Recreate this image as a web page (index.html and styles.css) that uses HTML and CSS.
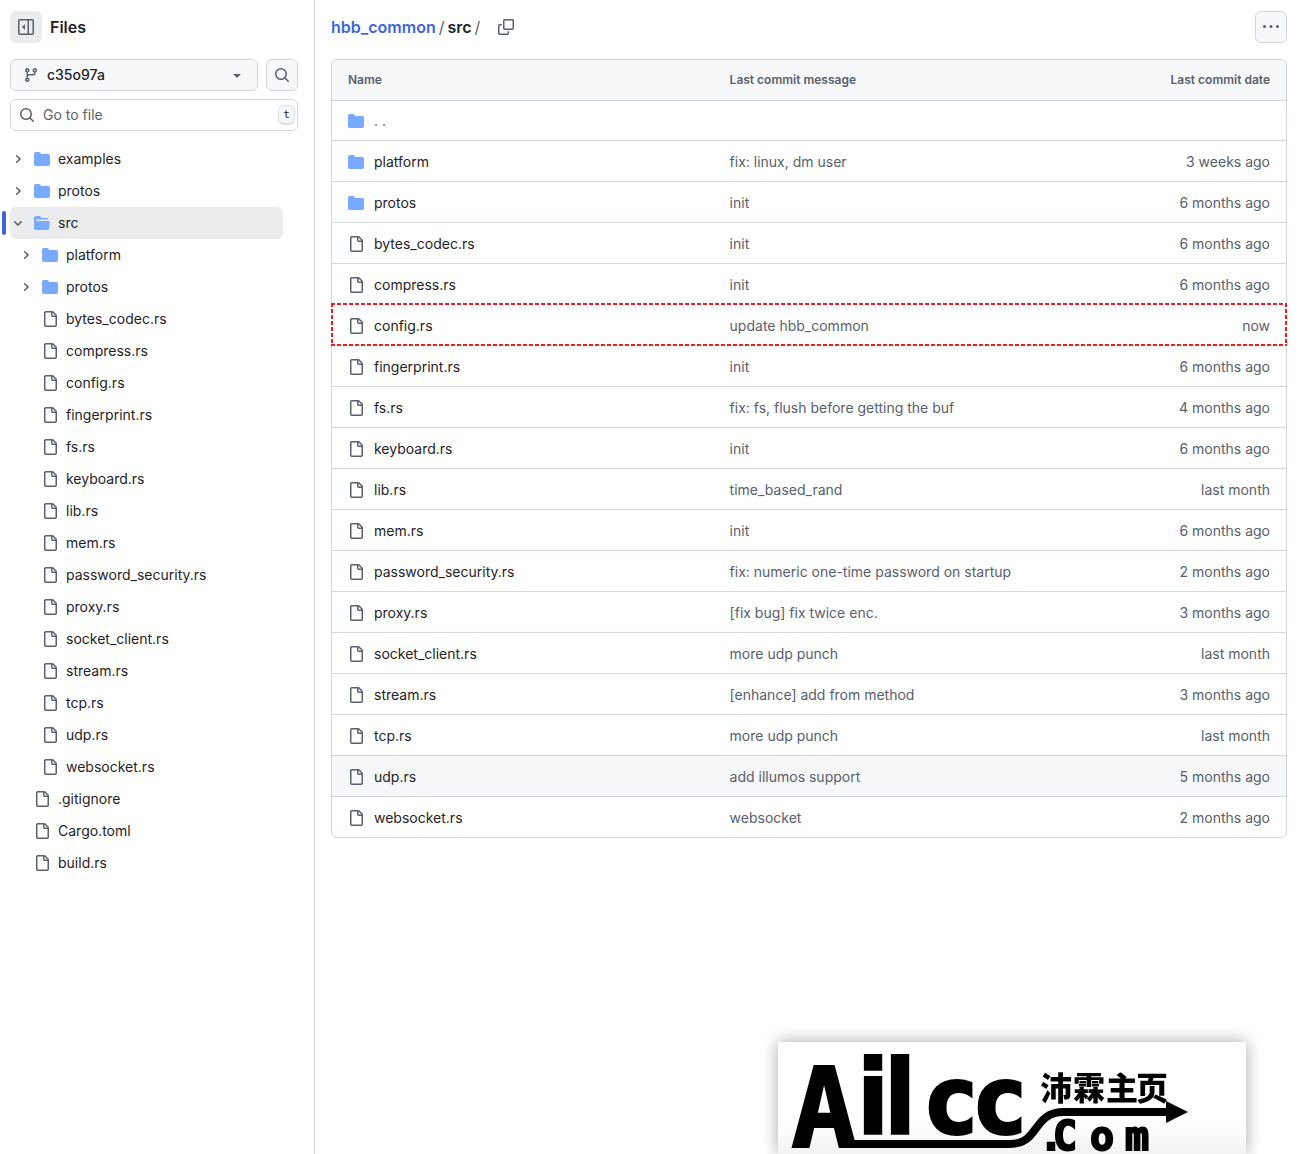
FILE: index.html
```html
<!DOCTYPE html>
<html lang="en">
<head>
  <meta charset="UTF-8" />
  <meta name="viewport" content="width=device-width, initial-scale=1" />
  <title>hbb_common/src</title>
  <link rel="stylesheet" href="styles.css">
</head>
<body>
  <!-- icons -->
  <svg class="sprite" aria-hidden="true">
    <symbol id="i-file" viewBox="0 0 16 16"><path d="M2 1.75C2 .784 2.784 0 3.75 0h6.586c.464 0 .909.184 1.237.513l2.914 2.914c.329.328.513.773.513 1.237v9.586A1.75 1.75 0 0 1 13.25 16h-9.5A1.75 1.75 0 0 1 2 14.25Zm1.75-.25a.25.25 0 0 0-.25.25v12.5c0 .138.112.25.25.25h9.5a.25.25 0 0 0 .25-.25V6h-2.75A1.75 1.75 0 0 1 9 4.25V1.5Zm6.75.062V4.25c0 .138.112.25.25.25h2.688l-.011-.013-2.914-2.914-.013-.011Z"/></symbol>
    <symbol id="i-folder" viewBox="0 0 16 16"><path d="M1.75 1A1.75 1.75 0 0 0 0 2.75v10.5C0 14.216.784 15 1.75 15h12.5A1.75 1.75 0 0 0 16 13.25v-8.5A1.75 1.75 0 0 0 14.25 3H7.5a.25.25 0 0 1-.2-.1l-.9-1.2C6.07 1.26 5.55 1 5 1H1.75Z"/></symbol>
    <symbol id="i-folder-open" viewBox="0 0 16 16"><path d="M.513 1.513A1.75 1.75 0 0 1 1.75 1h3.5c.55 0 1.07.26 1.4.7l.9 1.2a.25.25 0 0 0 .2.1H13a1 1 0 0 1 1 1v.5H2.75a.75.75 0 0 0 0 1.5h11.978a1 1 0 0 1 .994 1.117L15 13.25A1.75 1.75 0 0 1 13.25 15H1.75A1.75 1.75 0 0 1 0 13.25V2.75c0-.464.184-.91.513-1.237Z"/></symbol>
    <symbol id="i-right" viewBox="0 0 12 12"><path d="M4.7 10c-.2 0-.4-.1-.5-.2-.3-.3-.3-.8 0-1.1L6.9 6 4.2 3.3c-.3-.3-.3-.8 0-1.1.3-.3.8-.3 1.1 0l3.3 3.2c.3.3.3.8 0 1.1L5.3 9.7c-.2.2-.4.3-.6.3Z"/></symbol>
    <symbol id="i-down" viewBox="0 0 12 12"><path d="M6 8.825c-.2 0-.4-.1-.5-.2l-3.3-3.3c-.3-.3-.3-.8 0-1.1.3-.3.8-.3 1.1 0l2.7 2.7 2.7-2.7c.3-.3.8-.3 1.1 0 .3.3.3.8 0 1.1l-3.2 3.2c-.2.2-.4.3-.6.3Z"/></symbol>
    <symbol id="i-search" viewBox="0 0 16 16"><path d="M10.68 11.74a6 6 0 0 1-7.922-8.982 6 6 0 0 1 8.982 7.922l3.04 3.04a.749.749 0 0 1-.326 1.275.749.749 0 0 1-.734-.215ZM11.5 7a4.499 4.499 0 1 0-8.997 0A4.499 4.499 0 0 0 11.5 7Z"/></symbol>
    <symbol id="i-branch" viewBox="0 0 16 16"><path d="M9.5 3.25a2.25 2.25 0 1 1 3 2.122V6A2.5 2.5 0 0 1 10 8.5H6a1 1 0 0 0-1 1v1.128a2.251 2.251 0 1 1-1.5 0V5.372a2.25 2.25 0 1 1 1.5 0v1.836A2.493 2.493 0 0 1 6 7h4a1 1 0 0 0 1-1v-.628A2.25 2.25 0 0 1 9.5 3.25Zm-6 0a.75.75 0 1 0 1.5 0 .75.75 0 0 0-1.5 0Zm8.25-.75a.75.75 0 1 0 0 1.5.75.75 0 0 0 0-1.5ZM4.25 12a.75.75 0 1 0 0 1.5.75.75 0 0 0 0-1.5Z"/></symbol>
    <symbol id="i-caret" viewBox="0 0 16 16"><path d="m4.427 7.427 3.396 3.396a.25.25 0 0 0 .354 0l3.396-3.396A.25.25 0 0 0 11.396 7H4.604a.25.25 0 0 0-.177.427Z"/></symbol>
    <symbol id="i-copy" viewBox="0 0 16 16"><path d="M0 6.75C0 5.784.784 5 1.75 5h1.5a.75.75 0 0 1 0 1.5h-1.5a.25.25 0 0 0-.25.25v7.5c0 .138.112.25.25.25h7.5a.25.25 0 0 0 .25-.25v-1.5a.75.75 0 0 1 1.5 0v1.5A1.75 1.75 0 0 1 9.25 16h-7.5A1.75 1.75 0 0 1 0 14.25Z"/><path d="M5 1.75C5 .784 5.784 0 6.75 0h7.5C15.216 0 16 .784 16 1.75v7.5A1.75 1.75 0 0 1 14.25 11h-7.5A1.75 1.75 0 0 1 5 9.25Zm1.75-.25a.25.25 0 0 0-.25.25v7.5c0 .138.112.25.25.25h7.5a.25.25 0 0 0 .25-.25v-7.5a.25.25 0 0 0-.25-.25Z"/></symbol>
    <symbol id="i-dots" viewBox="0 0 16 16"><path d="M8 9a1.5 1.5 0 1 0 0-3 1.5 1.5 0 0 0 0 3ZM1.5 9a1.5 1.5 0 1 0 0-3 1.5 1.5 0 0 0 0 3Zm13 0a1.5 1.5 0 1 0 0-3 1.5 1.5 0 0 0 0 3Z"/></symbol>
    <symbol id="i-sidebar" viewBox="0 0 16 16"><path d="m4.177 7.823 2.396-2.396A.25.25 0 0 1 7 5.604v4.792a.25.25 0 0 1-.427.177L4.177 8.177a.25.25 0 0 1 0-.354Z"/><path d="M0 1.75C0 .784.784 0 1.75 0h12.5C15.216 0 16 .784 16 1.75v12.5A1.75 1.75 0 0 1 14.25 16H1.75A1.75 1.75 0 0 1 0 14.25Zm1.75-.25a.25.25 0 0 0-.25.25v12.5c0 .138.112.25.25.25H9.5v-13Zm12.5 13a.25.25 0 0 0 .25-.25V1.75a.25.25 0 0 0-.25-.25H11v13Z"/></symbol>
  </svg>

  <div class="layout">
    <aside class="sidebar">
      <div class="sidebar-title">
        <button class="toggle-btn" aria-label="Collapse file tree"><svg class="icon"><use href="#i-sidebar"/></svg></button>
        <h2>Files</h2>
      </div>

      <div class="branch-row">
        <button class="branch-btn">
          <svg class="icon"><use href="#i-branch"/></svg>
          <span class="branch-name">c35o97a</span>
          <svg class="icon"><use href="#i-caret"/></svg>
        </button>
        <button class="icon-btn" aria-label="Search"><svg class="icon"><use href="#i-search"/></svg></button>
      </div>

      <div class="file-search">
        <svg class="icon"><use href="#i-search"/></svg>
        <input type="text" id="go-to-file" aria-label="Go to file" placeholder="Go to file" />
        <kbd>t</kbd>
      </div>

      <ul class="tree">
        <li><a href="#"><svg class="chevron"><use href="#i-right"/></svg><svg class="icon folder"><use href="#i-folder"/></svg>examples</a></li>
        <li><a href="#"><svg class="chevron"><use href="#i-right"/></svg><svg class="icon folder"><use href="#i-folder"/></svg>protos</a></li>
        <li>
          <a href="#" class="current"><svg class="chevron"><use href="#i-down"/></svg><svg class="icon folder"><use href="#i-folder-open"/></svg>src</a>
          <ul>
            <li><a href="#"><svg class="chevron"><use href="#i-right"/></svg><svg class="icon folder"><use href="#i-folder"/></svg>platform</a></li>
            <li><a href="#"><svg class="chevron"><use href="#i-right"/></svg><svg class="icon folder"><use href="#i-folder"/></svg>protos</a></li>
            <li><a href="#" class="file"><svg class="icon"><use href="#i-file"/></svg>bytes_codec.rs</a></li>
            <li><a href="#" class="file"><svg class="icon"><use href="#i-file"/></svg>compress.rs</a></li>
            <li><a href="#" class="file"><svg class="icon"><use href="#i-file"/></svg>config.rs</a></li>
            <li><a href="#" class="file"><svg class="icon"><use href="#i-file"/></svg>fingerprint.rs</a></li>
            <li><a href="#" class="file"><svg class="icon"><use href="#i-file"/></svg>fs.rs</a></li>
            <li><a href="#" class="file"><svg class="icon"><use href="#i-file"/></svg>keyboard.rs</a></li>
            <li><a href="#" class="file"><svg class="icon"><use href="#i-file"/></svg>lib.rs</a></li>
            <li><a href="#" class="file"><svg class="icon"><use href="#i-file"/></svg>mem.rs</a></li>
            <li><a href="#" class="file"><svg class="icon"><use href="#i-file"/></svg>password_security.rs</a></li>
            <li><a href="#" class="file"><svg class="icon"><use href="#i-file"/></svg>proxy.rs</a></li>
            <li><a href="#" class="file"><svg class="icon"><use href="#i-file"/></svg>socket_client.rs</a></li>
            <li><a href="#" class="file"><svg class="icon"><use href="#i-file"/></svg>stream.rs</a></li>
            <li><a href="#" class="file"><svg class="icon"><use href="#i-file"/></svg>tcp.rs</a></li>
            <li><a href="#" class="file"><svg class="icon"><use href="#i-file"/></svg>udp.rs</a></li>
            <li><a href="#" class="file"><svg class="icon"><use href="#i-file"/></svg>websocket.rs</a></li>
          </ul>
        </li>
        <li><a href="#" class="file"><svg class="icon"><use href="#i-file"/></svg>.gitignore</a></li>
        <li><a href="#" class="file"><svg class="icon"><use href="#i-file"/></svg>Cargo.toml</a></li>
        <li><a href="#" class="file"><svg class="icon"><use href="#i-file"/></svg>build.rs</a></li>
      </ul>
    </aside>

    <main class="content">
      <div class="topbar">
        <nav class="breadcrumb" aria-label="Breadcrumb">
          <a href="#">hbb_common</a>
          <span class="sep">/</span>
          <strong>src</strong>
          <span class="sep">/</span>
        </nav>
        <button class="copy-btn" aria-label="Copy path"><svg class="icon"><use href="#i-copy"/></svg></button>
        <button class="icon-btn more-btn" aria-label="More options"><svg class="icon"><use href="#i-dots"/></svg></button>
      </div>

      <table class="files">
        <thead>
          <tr><th class="name">Name</th><th class="message">Last commit message</th><th class="date">Last commit date</th></tr>
        </thead>
        <tbody>
          <tr class="parent"><td colspan="3"><a href="#"><svg class="icon folder"><use href="#i-folder"/></svg><span class="dots">. .</span></a></td></tr>
          <tr><td><a href="#"><svg class="icon folder"><use href="#i-folder"/></svg>platform</a></td><td>fix: linux, dm user</td><td>3 weeks ago</td></tr>
          <tr><td><a href="#"><svg class="icon folder"><use href="#i-folder"/></svg>protos</a></td><td>init</td><td>6 months ago</td></tr>
          <tr><td><a href="#"><svg class="icon"><use href="#i-file"/></svg>bytes_codec.rs</a></td><td>init</td><td>6 months ago</td></tr>
          <tr><td><a href="#"><svg class="icon"><use href="#i-file"/></svg>compress.rs</a></td><td>init</td><td>6 months ago</td></tr>
          <tr class="marked"><td><a href="#"><svg class="icon"><use href="#i-file"/></svg>config.rs</a></td><td>update hbb_common</td><td>now</td></tr>
          <tr><td><a href="#"><svg class="icon"><use href="#i-file"/></svg>fingerprint.rs</a></td><td>init</td><td>6 months ago</td></tr>
          <tr><td><a href="#"><svg class="icon"><use href="#i-file"/></svg>fs.rs</a></td><td>fix: fs, flush before getting the buf</td><td>4 months ago</td></tr>
          <tr><td><a href="#"><svg class="icon"><use href="#i-file"/></svg>keyboard.rs</a></td><td>init</td><td>6 months ago</td></tr>
          <tr><td><a href="#"><svg class="icon"><use href="#i-file"/></svg>lib.rs</a></td><td>time_based_rand</td><td>last month</td></tr>
          <tr><td><a href="#"><svg class="icon"><use href="#i-file"/></svg>mem.rs</a></td><td>init</td><td>6 months ago</td></tr>
          <tr><td><a href="#"><svg class="icon"><use href="#i-file"/></svg>password_security.rs</a></td><td>fix: numeric one-time password on startup</td><td>2 months ago</td></tr>
          <tr><td><a href="#"><svg class="icon"><use href="#i-file"/></svg>proxy.rs</a></td><td>[fix bug] fix twice enc.</td><td>3 months ago</td></tr>
          <tr><td><a href="#"><svg class="icon"><use href="#i-file"/></svg>socket_client.rs</a></td><td>more udp punch</td><td>last month</td></tr>
          <tr><td><a href="#"><svg class="icon"><use href="#i-file"/></svg>stream.rs</a></td><td>[enhance] add from method</td><td>3 months ago</td></tr>
          <tr><td><a href="#"><svg class="icon"><use href="#i-file"/></svg>tcp.rs</a></td><td>more udp punch</td><td>last month</td></tr>
          <tr class="active"><td><a href="#"><svg class="icon"><use href="#i-file"/></svg>udp.rs</a></td><td>add illumos support</td><td>5 months ago</td></tr>
          <tr><td><a href="#"><svg class="icon"><use href="#i-file"/></svg>websocket.rs</a></td><td>websocket</td><td>2 months ago</td></tr>
        </tbody>
      </table>
    </main>
  </div>

  <!-- site logo -->
  <div class="logo-card">
    <svg viewBox="0 0 468 112" role="img" aria-label="Ailcc.com">
      <path class="swoosh" d="M66 102H232C262 102 254 70 286 70H392"/>
      <path d="M388 59L410 70L388 81Z"/>
      <text class="logo-latin"><tspan class="logo-a" x="13" y="105">A</tspan><tspan x="79 106" y="92">il</tspan><tspan class="logo-c" x="148 197" y="92">cc</tspan></text>
      <text class="logo-cjk" x="262 295 328 358" y="58">沛霖主页</text>
      <text class="logo-com" x="261 275 312 347" y="108">.Com</text>
    </svg>
  </div>
</body>
</html>
```

FILE: styles.css
```css
* {
  box-sizing: border-box;
}
body {
  margin: 0;
  font-family: Inter, "Liberation Sans", sans-serif;
  font-size: 14px;
  line-height: 20px;
  color: #1f2328;
  background-color: #fff;
}
a {
  color: inherit;
  text-decoration: none;
}
button {
  font: inherit;
  color: inherit;
  cursor: pointer;
}
.sprite {
  display: none;
}
.icon {
  width: 16px;
  height: 16px;
  flex: none;
  fill: #59606e;
}
.icon.folder {
  fill: #78abff;
}
.layout {
  display: flex;
  min-height: 100vh;
}

/* sidebar */
.sidebar {
  width: 315px;
  flex: none;
  padding: 11px 16px 16px 10px;
  border-right: 1px solid #d3d7df;
}
.sidebar-title {
  display: flex;
  align-items: center;
  gap: 8px;
  margin-bottom: 16px;
}
.sidebar-title h2 {
  margin: 0;
  font-size: 16px;
  font-weight: 600;
}
.toggle-btn,
.icon-btn {
  display: flex;
  align-items: center;
  justify-content: center;
  width: 32px;
  height: 32px;
  flex: none;
  padding: 0;
  border: 1px solid #d3d7df;
  border-radius: 6px;
  background-color: #f6f8fa;
}
.toggle-btn {
  border: none;
  background-color: #ebecee;
}
.branch-row {
  display: flex;
  gap: 8px;
  margin-bottom: 8px;
}
.branch-btn {
  display: flex;
  align-items: center;
  gap: 8px;
  flex: 1;
  height: 32px;
  padding: 0 12px;
  border: 1px solid #d3d7df;
  border-radius: 6px;
  background-color: #f6f8fa;
  font-weight: 500;
}
.branch-name {
  flex: 1;
  text-align: left;
}
.file-search {
  display: flex;
  align-items: center;
  gap: 8px;
  height: 32px;
  padding: 0 2px 0 8px;
  border: 1px solid #d3d7df;
  border-radius: 6px;
}
.file-search input {
  flex: 1;
  min-width: 0;
  padding: 0;
  border: none;
  outline: none;
  font: inherit;
}
.file-search input::placeholder {
  color: #59606e;
  opacity: 1;
}
kbd {
  width: 17px;
  height: 20px;
  border: 1px solid #dcdfe5;
  border-bottom-width: 2px;
  border-radius: 6px;
  background-color: #f6f8fa;
  font: 11px/17px "DejaVu Sans Mono", monospace;
  text-align: center;
}
.tree,
.tree ul {
  margin: 0;
  padding: 0;
  list-style: none;
}
.tree {
  margin-top: 12px;
  margin-right: 15px;
}
.tree a {
  display: flex;
  align-items: center;
  gap: 8px;
  height: 32px;
  padding-left: 2px;
  border-radius: 6px;
}
.tree .file {
  padding-left: 24px;
}
.tree ul a {
  padding-left: 10px;
}
.tree ul .file {
  padding-left: 32px;
}
.chevron {
  width: 12px;
  height: 12px;
  margin-right: 2px;
  flex: none;
  fill: #59606e;
}
.tree .current {
  position: relative;
  background-color: #ebecee;
}
.tree .current::before {
  content: "";
  position: absolute;
  left: -8px;
  top: 4px;
  width: 4px;
  height: 24px;
  border-radius: 2px;
  background-color: #3c66d8;
}

/* main */
.content {
  flex: 1;
  min-width: 0;
  padding: 11px 13px 16px 16px;
}
.topbar {
  display: flex;
  align-items: center;
  margin-bottom: 16px;
}
.breadcrumb {
  display: flex;
  gap: 3px;
  font-size: 16px;
}
.breadcrumb a {
  color: #3c66d8;
  font-weight: 600;
}
.breadcrumb strong {
  font-weight: 600;
}
.sep {
  color: #59606e;
}
.copy-btn {
  display: flex;
  margin-left: 10px;
  padding: 8px;
  border: none;
  background: none;
}
.more-btn {
  margin-left: auto;
}
.files {
  width: 100%;
  table-layout: fixed;
  border: 1px solid #d3d7df;
  border-radius: 6px;
  border-spacing: 0;
}
.files th,
.files td {
  padding: 0 16px;
  text-align: left;
}
.files th {
  height: 40px;
  background-color: #f6f8fa;
  color: #59606e;
  font-size: 12px;
  font-weight: 600;
}
.files th:first-child {
  border-top-left-radius: 6px;
}
.files th:last-child {
  border-top-right-radius: 6px;
}
.files .name,
.files .message {
  width: 40%;
}
.files td {
  height: 41px;
  padding-top: 1px;
  border-top: 1px solid #d3d7df;
  color: #59606e;
}
.files .parent td {
  height: 40px;
}
.files th:last-child,
.files td:nth-child(3) {
  text-align: right;
}
.files td a {
  display: flex;
  align-items: center;
  gap: 10px;
  color: #1f2328;
}
.files td a .dots {
  color: #59606e;
}
.files .active td {
  background-color: #f6f8fa;
}
.files .marked {
  position: relative;
}
.files .marked td:first-child::after {
  content: "";
  position: absolute;
  inset: -1px;
  pointer-events: none;
  background:
    repeating-linear-gradient(90deg, #ee1c25 0 4px, #fff 4px 6px) top / 100% 2px no-repeat,
    repeating-linear-gradient(90deg, #ee1c25 0 4px, #fff 4px 6px) bottom / 100% 2px no-repeat,
    repeating-linear-gradient(#ee1c25 0 4px, #fff 4px 6px) left / 2px 100% no-repeat,
    repeating-linear-gradient(#ee1c25 0 4px, #fff 4px 6px) right / 2px 100% no-repeat;
}

/* logo in the corner */
.logo-card {
  position: fixed;
  right: 54px;
  bottom: 0;
  width: 468px;
  background: linear-gradient(#fff 70%, #f3f3f3);
  box-shadow: 0 0 16px rgba(0, 0, 0, 0.35);
}
.logo-card svg {
  display: block;
}
.swoosh {
  fill: none;
  stroke: #000;
  stroke-width: 8px;
}
.logo-latin {
  font-family: "DejaVu Sans Condensed", "DejaVu Sans", sans-serif;
  font-size: 104px;
  font-weight: 700;
  stroke: #000;
  stroke-width: 2px;
}
.logo-a {
  font-family: "DejaVu Sans Mono", monospace;
  font-size: 110px;
}
.logo-c {
  font-size: 96px;
}
.logo-cjk {
  font-family: "Noto Sans CJK SC", sans-serif;
  font-size: 32px;
  font-weight: 900;
}
.logo-com {
  font-family: "DejaVu Sans Mono", monospace;
  font-size: 40px;
  font-weight: 700;
  stroke: #000;
  stroke-width: 2px;
}
```
